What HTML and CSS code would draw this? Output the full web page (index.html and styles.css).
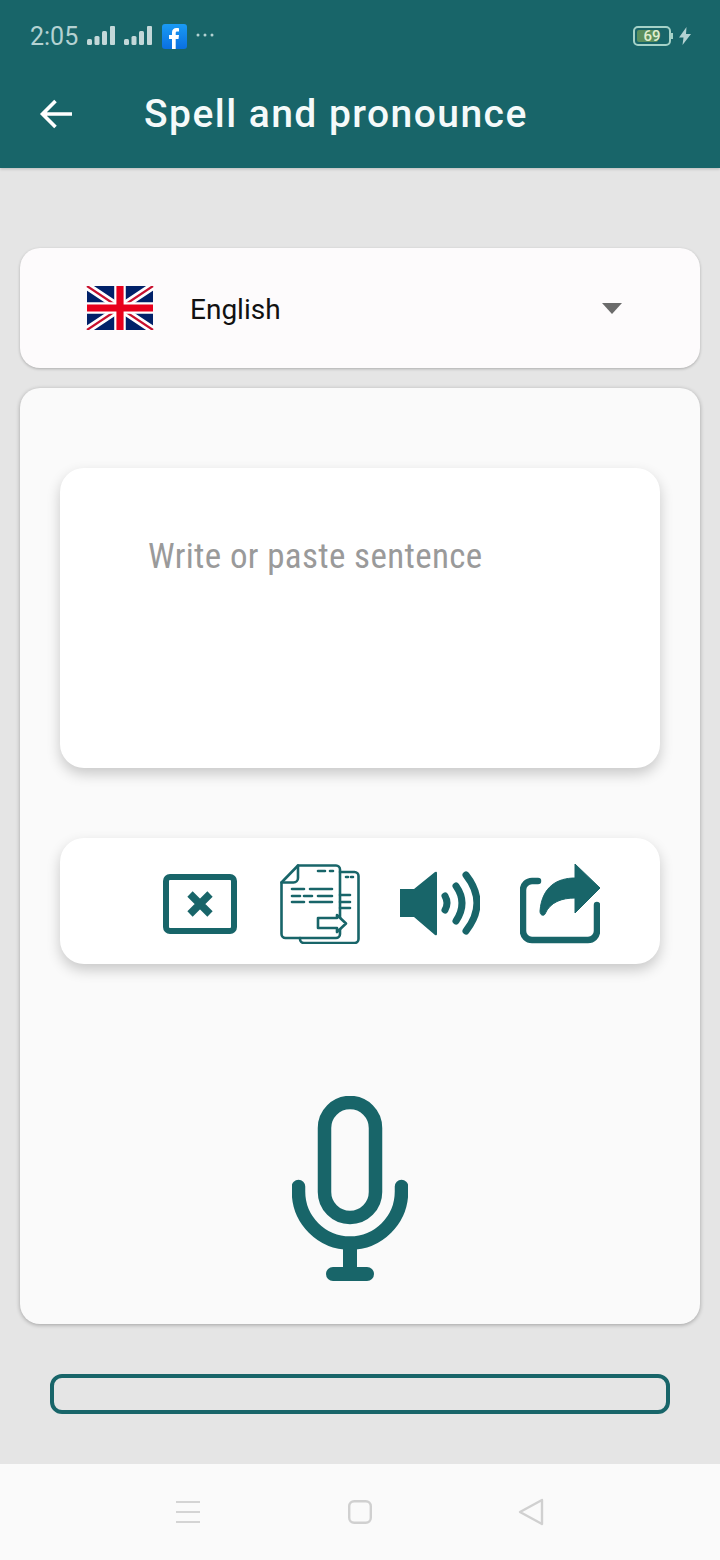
FILE: index.html
```html
<!DOCTYPE html>
<html lang="en">
<head>
    <meta charset="UTF-8">
    <meta name="viewport" content="width=device-width, initial-scale=1.0">
    <title>Spell and pronounce</title>
    <link rel="stylesheet" href="styles.css">
</head>
<body>

    <header class="appbar">
        <div class="status">
            <span class="time">2:05</span>
            <svg class="signal" width="30" height="20" viewBox="0 0 30 20">
                <rect x="0" y="13" width="5" height="6" rx="1.5"/><rect x="7.5" y="10" width="5" height="9" rx="1.5"/><rect x="15" y="5" width="5" height="14" rx="1.5"/><rect x="23" y="0" width="5" height="19" rx="1"/>
            </svg>
            <svg class="signal signal-two" width="30" height="20" viewBox="0 0 30 20">
                <rect x="0" y="13" width="5" height="6" rx="1.5"/><rect x="7.5" y="10" width="5" height="9" rx="1.5"/><rect x="15" y="5" width="5" height="14" rx="1.5"/><rect x="23" y="0" width="5" height="19" rx="1"/>
            </svg>
            <svg class="fb" width="25" height="25" viewBox="0 0 25 25">
                <defs>
                    <linearGradient id="fbBlue" x1="0" y1="0" x2="0" y2="1">
                        <stop offset="0" stop-color="#1a9bf5"/>
                        <stop offset="1" stop-color="#0a6fe0"/>
                    </linearGradient>
                </defs>
                <rect width="25" height="25" rx="3" fill="url(#fbBlue)"/>
                <path d="M10 25V15H7v-4h3V8.500C10 5.500 11.800 4 14.400 4c1.200 0 2.200.1 2.600.2v3.400h-1.700c-1.300 0-1.600.7-1.600 1.600V11h3.300l-.5 4H13.700v10z" fill="#fff"/>
            </svg>
            <svg class="dots" width="20" height="6" viewBox="0 0 20 6">
                <circle cx="3" cy="3" r="1.500"/><circle cx="10" cy="3" r="1.500"/><circle cx="17" cy="3" r="1.500"/>
            </svg>
            <div class="battery">
                <div class="battery-body">
                    <div class="battery-fill"></div>
                    <span class="battery-num">69</span>
                </div>
                <div class="battery-tip"></div>
                <svg class="bolt" width="12" height="18" viewBox="0 0 12 18">
                    <path d="M7.500 0L0 10.500h4.500L3.500 18 12 7H7z"/>
                </svg>
            </div>
        </div>
        <div class="toolbar">
            <svg class="back" width="34" height="32" viewBox="0 0 34 32">
                <path d="M33 16H3.500M16.500 3L3.500 16l13 13" fill="none" stroke="#fff" stroke-width="3.600"/>
            </svg>
            <h1>Spell and pronounce</h1>
        </div>
    </header>

    <main class="content">
        <div class="lang-card">
            <svg class="flag" width="68" height="44" viewBox="0 0 60 40">
                <rect width="60" height="40" fill="#012169"/>
                <path d="M0 0L60 40M60 0L0 40" stroke="#fff" stroke-width="7"/>
                <path d="M0 0L60 40M60 0L0 40" stroke="#c8102e" stroke-width="2"/>
                <path d="M30 0V40M0 20H60" stroke="#fff" stroke-width="10.500"/>
                <path d="M30 0V40M0 20H60" stroke="#e8001c" stroke-width="6.500"/>
            </svg>
            <span class="lang-name">English</span>
            <div class="caret"></div>
        </div>

        <div class="panel">
            <div class="text-card">
                <span class="placeholder">Write or paste sentence</span>
            </div>

            <div class="actions">
                <button class="action">
                    <svg width="74" height="60" viewBox="0 0 74 60">
                        <rect x="3" y="3" width="68" height="54" rx="4" fill="none" stroke="#186569" stroke-width="6"/>
                        <path d="M27 20l20 20M47 20l-20 20" stroke="#186569" stroke-width="7.500"/>
                    </svg>
                </button>
                <button class="action">
                    <svg width="80" height="80" viewBox="0 0 80 80" fill="none" stroke="#186569" stroke-width="2.600" stroke-linecap="round" stroke-linejoin="round">
                        <path d="M60 8H74.500a4 4 0 0 1 4 4V75a4 4 0 0 1-4 4H24a4 4 0 0 1-4-4V74"/>
                        <path d="M1.500 18.500L18 1.500H56a4 4 0 0 1 4 4V70a4 4 0 0 1-4 4H5.500a4 4 0 0 1-4-4z"/>
                        <path d="M18 1.500V14a4.500 4.500 0 0 1-4.500 4.500H1.500"/>
                        <path d="M38 7H45M50 7H53M66 13H68M71 13H73M12 25H24M30 25H52M12 32H20M24 32H32M38 32H52M12 38H24M30 38H52M60 31H70M60 38H70M60 44H70"/>
                        <path d="M38 54H57V51L66 59.500L57 68V64H38z" fill="#fff"/>
                    </svg>
                </button>
                <button class="action">
                    <svg width="80" height="66" viewBox="0 0 80 66">
                        <path d="M0 18H14L35 1Q37 0 37 2V63Q37 65 35 64L14 46H0z" fill="#186569"/>
                        <g fill="none" stroke="#186569" stroke-linecap="round" stroke-width="7">
                            <path d="M45 25Q49 32 45 39"/>
                            <path d="M56 15Q68 32 56 50"/>
                            <path d="M66 4Q88 32 66 60"/>
                        </g>
                    </svg>
                </button>
                <button class="action">
                    <svg width="80" height="80" viewBox="0 0 80 80">
                        <path d="M18 17H12a9 9 0 0 0-9 9V67a9 9 0 0 0 9 9H68a9 9 0 0 0 9-9V41" fill="none" stroke="#186569" stroke-width="6.500" stroke-linecap="round"/>
                        <path d="M55 0L80 24L55 49V34C42 34 30 38 25 50C24 52 20 52 20 47C22 22 38 14 55 14z" fill="#186569" stroke="#186569" stroke-width="1" stroke-linejoin="round"/>
                    </svg>
                </button>
            </div>

            <div class="mic-wrap">
                <svg width="116" height="186" viewBox="0 0 116 186">
                    <rect x="32.500" y="6.500" width="51" height="115" rx="25.500" fill="none" stroke="#186569" stroke-width="13.500"/>
                    <path d="M6.500 90.500V95.500a51.500 51.500 0 0 0 103 0V90.500" fill="none" stroke="#186569" stroke-width="13.500" stroke-linecap="round"/>
                    <path d="M58 147V178" stroke="#186569" stroke-width="14"/>
                    <path d="M41 178H75" stroke="#186569" stroke-width="14" stroke-linecap="round"/>
                </svg>
            </div>
        </div>

        <div class="progress"></div>
    </main>

    <nav class="navbar">
        <svg width="24" height="24" viewBox="0 0 24 24">
            <path d="M0 2H24M0 12H24M0 22H24" stroke="#d4d4d4" stroke-width="2.200"/>
        </svg>
        <svg width="24" height="24" viewBox="0 0 24 24">
            <rect x="1.200" y="1.200" width="21.600" height="21.600" rx="5" fill="none" stroke="#d0d0d0" stroke-width="2.400"/>
        </svg>
        <svg width="26" height="28" viewBox="0 0 26 28">
            <path d="M24 2L2 14l22 12z" fill="none" stroke="#d0d0d0" stroke-width="2.400" stroke-linejoin="round"/>
        </svg>
    </nav>

</body>
</html>
```

FILE: styles.css
```css
* {
    box-sizing: border-box;
}

body {
    font-family: 'Roboto', sans-serif;
    background: #e5e5e5;
    color: #000;
    margin: 0;
    padding: 0;
    width: 720px;
    height: 1560px;
    display: flex;
    flex-direction: column;
    overflow: hidden;
}

.appbar {
    background: #186569;
    height: 168px;
    box-shadow: 0 1px 3px rgba(0, 0, 0, 0.2);
    flex-shrink: 0;
}

.status {
    height: 72px;
    padding: 0 29px 0 30px;
    display: flex;
    align-items: center;
    color: #b4d2d2;
}

.time {
    font-size: 25px;
    width: 57px;
}

.signal {
    fill: #c3d8d9;
    margin-right: 7px;
}

.signal-two {
    margin-right: 8px;
}

.fb {
    margin-right: 8px;
}

.dots {
    fill: #b4d2d2;
    margin-top: -3px;
}

.battery {
    margin-left: auto;
    display: flex;
    align-items: center;
}

.battery-body {
    position: relative;
    width: 38px;
    height: 20px;
    border: 2px solid #a5d2c8;
    border-radius: 5px;
    overflow: hidden;
    display: flex;
    align-items: center;
    justify-content: center;
}

.battery-fill {
    position: absolute;
    left: 2px;
    top: 2px;
    bottom: 2px;
    width: 21px;
    background: #5b8f5e;
    border-radius: 2px;
}

.battery-num {
    position: relative;
    font-size: 15px;
    font-weight: 500;
    color: #e0efd0;
}

.battery-tip {
    width: 2px;
    height: 6px;
    background: #a5d2c8;
    margin-right: 6px;
}

.bolt {
    fill: #b4d2d2;
}

.toolbar {
    height: 84px;
    padding: 0 0 0 39px;
    display: flex;
    align-items: center;
}

.back {
    margin-top: -1px;
}

h1 {
    margin: 0 0 0 71px;
    color: #f5fafa;
    font-size: 39px;
    font-weight: 500;
    letter-spacing: 1.45px;
}

.content {
    flex: 1;
    padding: 80px 20px 0;
}

.lang-card {
    height: 120px;
    background: #fdfbfc;
    border-radius: 20px;
    box-shadow: 0 1px 3px rgba(0, 0, 0, 0.25);
    display: flex;
    align-items: center;
    padding: 0 78px 0 66px;
}

.flag {
    margin-top: -1px;
}

.lang-name {
    margin-left: 36px;
    margin-top: 2px;
    font-size: 28px;
    color: #111;
}

.caret {
    margin-left: auto;
    width: 0;
    height: 0;
    border-left: 10px solid transparent;
    border-right: 10px solid transparent;
    border-top: 11px solid #6b6b6b;
}

.panel {
    margin-top: 20px;
    height: 936px;
    background: #fafafa;
    border-radius: 20px;
    box-shadow: 0 1px 4px rgba(0, 0, 0, 0.3);
    padding: 80px 40px 0;
}

.text-card {
    height: 300px;
    background: #fff;
    border-radius: 24px;
    box-shadow: 0 6px 14px rgba(0, 0, 0, 0.2);
    padding: 67px 0 0 88px;
}

.placeholder {
    font-size: 35px;
    font-stretch: 75%;
    color: #9a9a9a;
    letter-spacing: 0.35px;
    line-height: 44px;
    display: block;
}

.actions {
    margin-top: 70px;
    height: 126px;
    background: #fff;
    border-radius: 24px;
    box-shadow: 0 6px 14px rgba(0, 0, 0, 0.2);
    display: flex;
    align-items: center;
    padding: 6px 0 0 80px;
}

.action {
    width: 120px;
    height: 80px;
    padding: 0;
    border: none;
    background: none;
    display: flex;
    align-items: center;
    justify-content: center;
}

.mic-wrap {
    margin-top: 132px;
    padding-right: 20px;
    display: flex;
    justify-content: center;
}

.progress {
    margin: 50px 30px 0;
    height: 40px;
    border: 4px solid #186569;
    border-radius: 12px;
}

.navbar {
    height: 96px;
    background: #fafafa;
    flex-shrink: 0;
    display: flex;
    align-items: center;
    padding-left: 176px;
    gap: 148px;
}

.navbar svg:last-child {
    margin-left: -2px;
}
```
